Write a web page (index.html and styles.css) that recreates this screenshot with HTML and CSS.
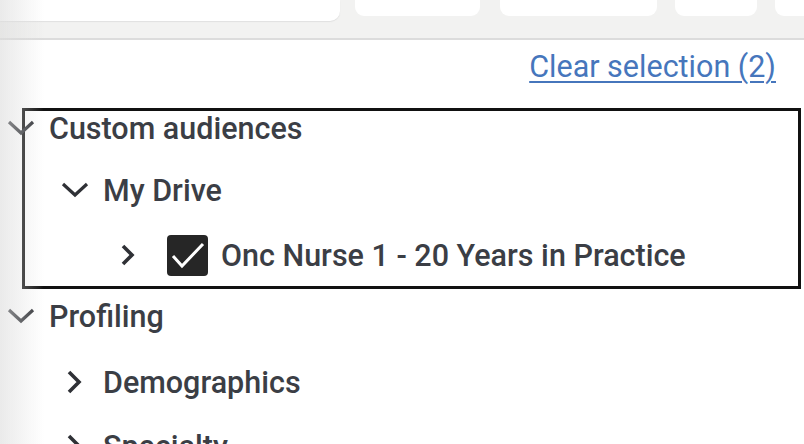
FILE: index.html
```html
<!DOCTYPE html>
<html lang="en">
<head>
<meta charset="UTF-8">
<title>Audiences</title>
<link rel="stylesheet" href="styles.css">
</head>
<body>
    <div class="topbar">
        <div class="tab tab-wide"></div>
        <div class="tab tab-2"></div>
        <div class="tab tab-3"></div>
        <div class="tab tab-4"></div>
        <div class="tab tab-5"></div>
    </div>

    <div class="actions">
        <a href="#" class="clear">Clear selection (2)</a>
    </div>

    <div class="tree">
        <div class="focus-box">
            <div class="row level-0 first">
                <svg class="chev" viewBox="0 0 28 28"><path d="M2 8l12 11 12-11"/></svg>
                <span>Custom audiences</span>
            </div>
            <div class="row level-1 second">
                <svg class="chev" viewBox="0 0 28 28"><path d="M2 8l12 11 12-11"/></svg>
                <span>My Drive</span>
            </div>
            <div class="row level-2 third">
                <svg class="chev-r" viewBox="0 0 28 28"><path d="M8 5l9 9-9 9"/></svg>
                <span class="check">
                    <svg viewBox="0 0 41 41"><path d="M6 21l9 10 21-22"/></svg>
                </span>
                <span>Onc Nurse 1 - 20 Years in Practice</span>
            </div>
        </div>
        <div class="row level-0 profiling">
            <svg class="chev" viewBox="0 0 28 28"><path d="M2 8l12 11 12-11"/></svg>
            <span>Profiling</span>
        </div>
        <div class="row level-1 demo">
            <svg class="chev-r" viewBox="0 0 28 28"><path d="M8 4l10 10-10 10"/></svg>
            <span>Demographics</span>
        </div>
        <div class="row level-1">
            <svg class="chev-r" viewBox="0 0 28 28"><path d="M8 4l10 10-10 10"/></svg>
            <span>Specialty</span>
        </div>
    </div>

    <div class="edge-shade"></div>
</body>
</html>
```

FILE: styles.css
```css
html, body {height: 444px; overflow: hidden;}
body {margin: 0; background: #fff; font-family: Roboto, "Noto Sans", Arial, sans-serif; color: #3b3e45;}

.topbar {display: flex; align-items: flex-start; height: 38px; background: #f2f2f1; border-bottom: 2px solid #dcdcdc;}
.tab {flex-shrink: 0; background: #fff; height: 16px; border-radius: 0 0 9px 9px;}
.tab-wide {width: 340px; height: 21px; border-radius: 0 0 10px 0; box-shadow: 0 1px 1px #e0e0e0;}
.tab-2 {width: 125px; margin-left: 15px;}
.tab-3 {width: 157px; margin-left: 20px;}
.tab-4 {width: 82px; margin-left: 18px;}
.tab-5 {width: 60px; margin-left: 18px;}

.actions {display: flex; justify-content: flex-end; align-items: flex-start; padding: 10px 28px 0 0; height: 68px; box-sizing: border-box;}
.clear {font-size: 30.5px; color: #4676bc; text-decoration: underline; text-decoration-thickness: 2px; text-underline-offset: 4px; line-height: 34px;}

.tree {font-size: 30.5px; font-weight: 500;}
.focus-box {border: 3px solid #111; margin: 0 3px 0 22px; height: 181px; box-sizing: border-box;}
.focus-box .row {margin-left: -25px;}
.row {display: flex; align-items: center; height: 64px;}
.row span {white-space: nowrap;}
.first {height: 34px;}
.second {height: 62px; margin-top: 14px;}
.third {height: 62px; margin-top: 3px;}
.profiling {height: 54px;}
.demo {margin-top: 7px;}
.level-0 {padding-left: 7px;}
.level-1 {padding-left: 61px;}
.level-2 {padding-left: 115px;}

.chev {width: 28px; height: 28px; fill: none; stroke: #2f3136; stroke-width: 3.2; margin-right: 14px;}
.chev-r {width: 28px; height: 28px; fill: none; stroke: #2f3136; stroke-width: 3.6; margin-right: 14px;}
.level-2 .chev-r {margin-right: 24px;}

.check {width: 41px; height: 41px; background: #262626; border-radius: 4px; display: flex; margin-right: 13px;}
.check svg {width: 41px; height: 41px; fill: none; stroke: #fff; stroke-width: 3;}

.edge-shade {position: fixed; top: 0; left: 0; bottom: 0; width: 44px; background: linear-gradient(to right, rgba(220,220,220,0.6), rgba(255,255,255,0)); pointer-events: none;}
```
